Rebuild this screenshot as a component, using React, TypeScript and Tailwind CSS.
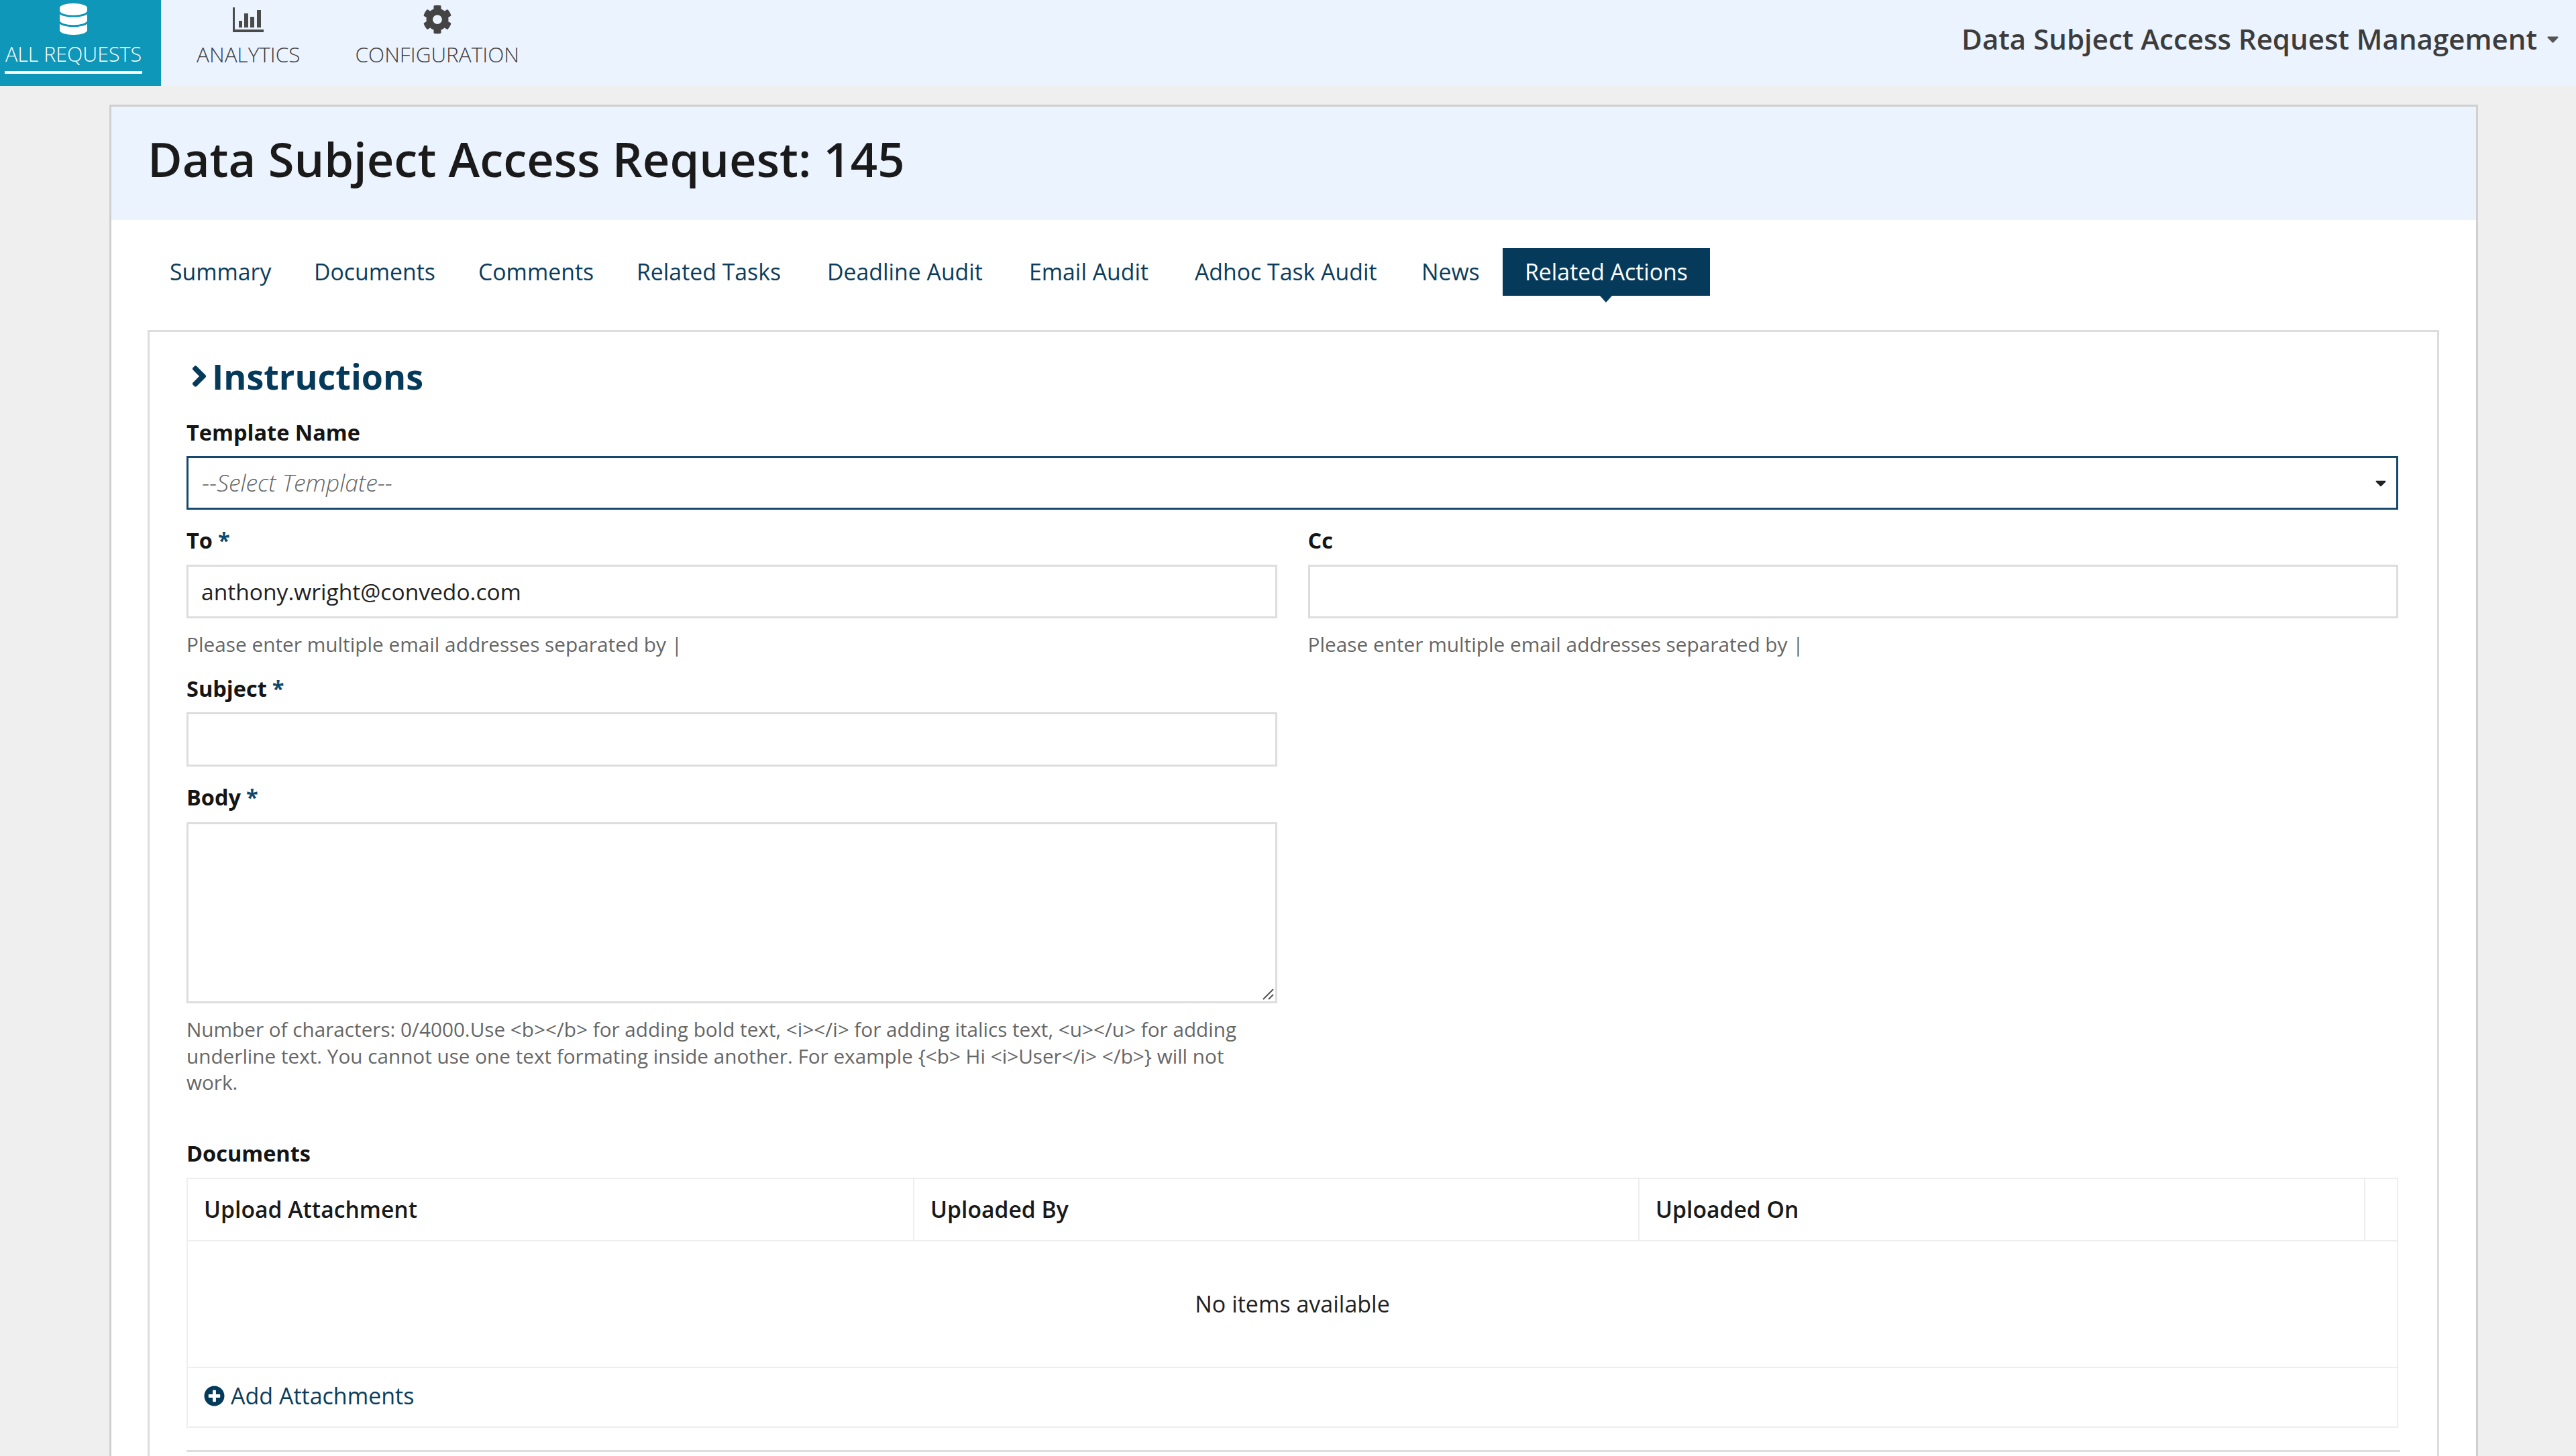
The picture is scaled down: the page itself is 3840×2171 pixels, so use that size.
import { FaDatabase, FaCog, FaPlusCircle, FaAngleRight, FaCaretDown } from "react-icons/fa";

const tabs = [
  { label: "Summary", width: "w-[215px]" },
  { label: "Documents", width: "w-[245px]" },
  { label: "Comments", width: "w-[236px]" },
  { label: "Related Tasks", width: "w-[284px]" },
  { label: "Deadline Audit", width: "w-[301px]" },
  { label: "Email Audit", width: "w-[247px]" },
  { label: "Adhoc Task Audit", width: "w-[338px]" },
  { label: "News", width: "w-[154px]" },
];
const hint = "Please enter multiple email addresses separated by |";

function ChartIcon() {
  return (
    <svg width="46" height="37" viewBox="0 0 46 37" fill="#4a4a4a">
      <path d="M0 0h3v33h43v4H0z" />
      <rect x="9" y="20" width="5" height="10" />
      <rect x="17" y="9" width="6" height="21" />
      <rect x="26" y="14" width="6" height="16" />
      <rect x="36" y="4" width="6" height="26" />
    </svg>
  );
}

function Label({ text, required }: { text: string; required?: boolean }) {
  return (
    <div className="h-[40px] text-[32.5px] leading-[40px] font-bold text-[#151515]">
      {text}
      {required && <span className="ml-[8px] text-[#0a4a70]">*</span>}
    </div>
  );
}

export default function App() {
  return (
    <div className="h-[2171px] w-[3840px] overflow-hidden bg-[#efefef] font-['Open_Sans',sans-serif]">
      <header className="flex h-[128px] items-stretch justify-between bg-[#ebf3fe]">
        <nav className="flex items-stretch">
          <div className="flex w-[240px] flex-col bg-[#0e97b9] pl-[7px] text-white">
            <div className="flex w-[205px] justify-center pt-[5px] text-[47px]">
              <FaDatabase className="h-[47px] w-[41px]" />
            </div>
            <div className="mt-[8px] w-[205px] border-b-[4px] border-white pb-[4px] text-center text-[30.4px] leading-[42px] font-light whitespace-nowrap">
              ALL REQUESTS
            </div>
          </div>
          <div className="ml-[12px] flex flex-col items-center px-[41px] text-[#3d3d3d]">
            <div className="mt-[1px] flex h-[47px] items-center pt-[10px]">
              <ChartIcon />
            </div>
            <div className="mt-[12px] text-[31.5px] leading-[42px] font-light whitespace-nowrap">ANALYTICS</div>
          </div>
          <div className="flex flex-col items-center px-[41px] text-[#3d3d3d]">
            <div className="mt-[5px] flex h-[47px] items-center">
              <FaCog className="h-[44px] w-[44px] text-[#444444]" />
            </div>
            <div className="mt-[8px] text-[31.5px] leading-[42px] font-light whitespace-nowrap">CONFIGURATION</div>
          </div>
        </nav>
        <div className="flex items-start pt-[29px] pr-[22px] text-[#3c3c3c]">
          <span className="text-[42px] leading-[58px] font-semibold whitespace-nowrap">Data Subject Access Request Management</span>
          <FaCaretDown className="mt-[15px] ml-[11px] h-[28px] w-[25px] text-[#555555]" />
        </div>
      </header>

      <main className="mt-[28px] ml-[163px] w-[3531px] border-[3px] border-b-0 border-[#d0d0d0] bg-white">
        <div className="flex h-[169px] items-center bg-[#ebf3fe] pb-[14px] pl-[54px]">
          <h1 className="text-[70.5px] leading-[90px] font-semibold text-[#1a1a1a]">Data Subject Access Request: 145</h1>
        </div>

        <div className="mt-[42px] ml-[54px] flex h-[71px] items-stretch text-[33.8px] text-[#0a3d5c]">
          {tabs.map((t) => (
            <div key={t.label} className={`flex items-center pl-[33px] whitespace-nowrap ${t.width}`}>
              {t.label}
            </div>
          ))}
          <div className="relative flex items-center bg-[#063a5a] px-[33px] whitespace-nowrap text-white">
            Related Actions
            <span className="absolute top-full left-1/2 h-0 w-0 -translate-x-1/2 border-x-[9px] border-t-[10px] border-x-transparent border-t-[#063a5a]" />
          </div>
        </div>

        <section className="mt-[51px] ml-[54px] w-[3416px] border-[3px] border-b-0 border-[#dddddd] pt-[36px] pr-[58px] pb-[60px] pl-[55px]">
          <div className="flex h-[60px] items-center text-[#063a5a]">
            <FaAngleRight className="h-[50px] w-[38px]" />
            <h2 className="text-[52px] leading-[60px] font-bold">Instructions</h2>
          </div>

          <div className="mt-[34px]">
            <Label text="Template Name" />
          </div>
          <div className="mt-[15px] flex h-[80px] items-center justify-between border-[3px] border-[#14496b] pr-[12px] pl-[20px]">
            <span className="text-[35.5px] font-light text-[#666666] italic">--Select Template--</span>
            <FaCaretDown className="h-[26px] w-[22px] text-[#222222]" />
          </div>

          <div className="mt-[26px] grid grid-cols-2 gap-x-[46px]">
            <div>
              <Label text="To" required />
              <input
                readOnly
                value="anthony.wright@convedo.com"
                className="mt-[16px] h-[80px] w-full border-[3px] border-[#dddddd] px-[19px] text-[33.6px] text-[#222222] outline-none"
              />
              <div className="mt-[19px] h-[40px] text-[29.8px] leading-[40px] text-[#666666]">{hint}</div>

              <div className="mt-[26px]">
                <Label text="Subject" required />
              </div>
              <input readOnly className="mt-[15px] h-[81px] w-full border-[3px] border-[#dddddd] outline-none" />

              <div className="mt-[26px]">
                <Label text="Body" required />
              </div>
              <div className="relative mt-[17px] h-[270px] border-[3px] border-[#dddddd]">
                <svg className="absolute right-[2px] bottom-[2px]" width="20" height="20" viewBox="0 0 20 20" stroke="#555555" strokeWidth="2">
                  <path d="M19 4 4 19M19 12l-7 7" />
                </svg>
              </div>
              <p className="mt-[19px] text-[29.7px] leading-[39.5px] text-[#666666]">
                {"Number of characters: 0/4000.Use <b></b> for adding bold text, <i></i> for adding italics text, <u></u> for adding underline text. You cannot use one text formating inside another. For example {<b> Hi <i>User</i> </b>} will not work."}
              </p>
            </div>
            <div>
              <Label text="Cc" />
              <input readOnly className="mt-[16px] h-[80px] w-full border-[3px] border-[#dddddd] outline-none" />
              <div className="mt-[19px] h-[40px] text-[29.8px] leading-[40px] text-[#666666]">{hint}</div>
            </div>
          </div>

          <div className="mt-[66px]">
            <Label text="Documents" />
          </div>
          <div className="mt-[16px] border-[2px] border-[#eeeeee]">
            <div className="flex h-[93px] border-b-[2px] border-[#eeeeee] text-[33.7px] font-semibold text-[#1a1a1a]">
              <div className="flex w-[1083px] items-center border-r-[2px] border-[#eeeeee] pl-[24px]">Upload Attachment</div>
              <div className="flex w-[1081px] items-center border-r-[2px] border-[#eeeeee] pl-[24px]">Uploaded By</div>
              <div className="flex w-[1082px] items-center border-r-[2px] border-[#eeeeee] pl-[24px]">Uploaded On</div>
              <div className="flex-1" />
            </div>
            <div className="flex h-[189px] items-center justify-center border-b-[2px] border-[#eeeeee] text-[34px] text-[#222222]">
              No items available
            </div>
            <div className="flex h-[87px] items-center pb-[3px] pl-[24px] text-[34px] text-[#0a3d5c]">
              <FaPlusCircle className="mr-[9px] h-[31px] w-[31px] text-[#063a5a]" />
              Add Attachments
            </div>
          </div>
          <div className="mt-[33px] -mr-[3px] border-t-[3px] border-[#dddddd]" />
        </section>
      </main>
    </div>
  );
}
